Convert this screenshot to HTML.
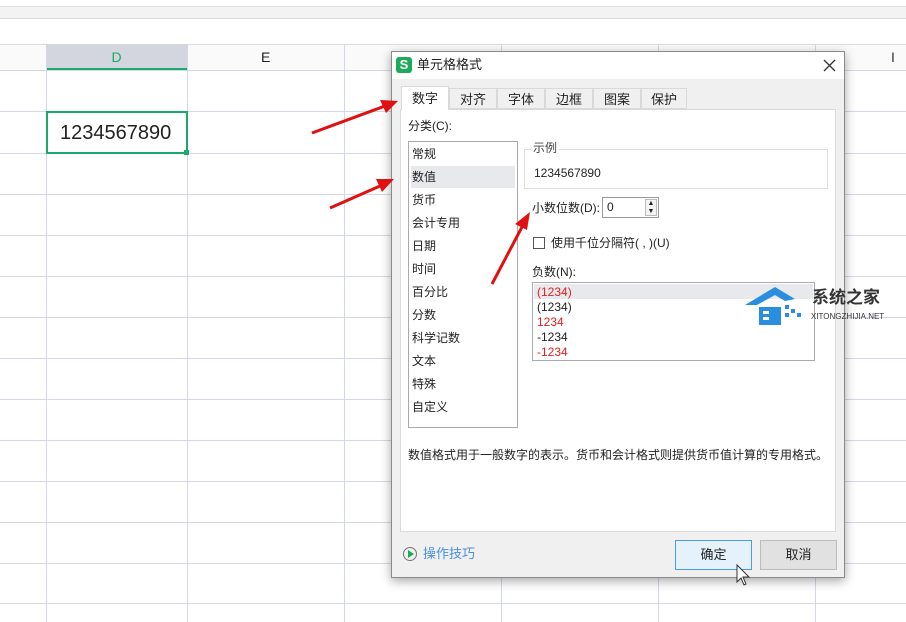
<!DOCTYPE html>
<html><head><meta charset="utf-8"><style>
*{margin:0;padding:0;box-sizing:border-box}
body{width:906px;height:622px;overflow:hidden;background:#fff;position:relative;font-family:"Liberation Sans","Noto Sans CJK SC",sans-serif;font-size:12px;color:#222;line-height:1.2}
.a{position:absolute}
.vl{position:absolute;top:44px;bottom:0;width:1px;background:#d4d7e6}
.hl{position:absolute;left:0;right:0;height:1px;background:#d4d7e6}
.li{position:absolute;left:3px;font-size:12px}
</style></head><body>
<div class="a" style="left:0;top:0;width:906px;height:7px;background:#fff;border-bottom:1px solid #e0e0e0"></div>
<div class="a" style="left:0;top:7px;width:906px;height:12px;background:#f3f3f3;border-bottom:1px solid #dcdcdc"></div>
<div class="a" style="left:0;top:44px;width:906px;height:26px;background:#fafafa;border-top:1px solid #dcdcdc"></div>
<div class="a" style="left:46px;top:44px;width:141px;height:26px;background:#d3d6de;border-bottom:2px solid #1aab6b;color:#1aab6b;font-size:14px;text-align:center;line-height:26px">D</div>
<div class="a" style="left:261px;top:44px;font-size:14px;line-height:26px">E</div>
<div class="a" style="left:891px;top:44px;font-size:14px;line-height:26px;color:#333">I</div>
<div class="vl" style="left:46px"></div><div class="vl" style="left:187px"></div><div class="vl" style="left:344px"></div><div class="vl" style="left:501px"></div><div class="vl" style="left:658px"></div><div class="vl" style="left:815px"></div>
<div class="hl" style="top:70px"></div><div class="hl" style="top:111px"></div><div class="hl" style="top:153px"></div><div class="hl" style="top:194px"></div><div class="hl" style="top:235px"></div><div class="hl" style="top:276px"></div><div class="hl" style="top:317px"></div><div class="hl" style="top:358px"></div><div class="hl" style="top:399px"></div><div class="hl" style="top:440px"></div><div class="hl" style="top:481px"></div><div class="hl" style="top:522px"></div><div class="hl" style="top:563px"></div><div class="hl" style="top:603px"></div>
<div class="a" style="left:46px;top:111px;width:142px;height:43px;border:2px solid #1aab6b;background:#fff;font-size:20px;line-height:41px;padding-left:12px;color:#222">1234567890</div>
<div class="a" style="left:184px;top:150px;width:5px;height:5px;background:#1aab6b"></div>

<div class="a" style="left:391px;top:51px;width:454px;height:527px;background:#f0f0f0;border:1px solid #8a8a8a;box-shadow:0 3px 10px rgba(0,0,0,.35)">
 <div class="a" style="left:0;top:0;width:452px;height:27px;background:#fff"></div>
 <div class="a" style="left:4px;top:5px;width:16px;height:16px;background:#1bab5b;border-radius:3px;color:#fff;font-weight:bold;font-size:13px;text-align:center;line-height:16px">S</div>
 <div class="a" style="left:25px;top:5px;font-size:13px">单元格格式</div>
 <svg class="a" style="left:431px;top:7px" width="13" height="13"><path d="M1 1L12 12M12 1L1 12" stroke="#333" stroke-width="1.3"/></svg>
 <div class="a" style="left:8px;top:57px;width:436px;height:423px;background:#fff;border:1px solid #d9d9d9"></div>
 <div class="a" style="left:9px;top:34px;width:48px;height:24px;background:#fff;border:1px solid #d9d9d9;border-bottom:none;text-align:center;line-height:24px;font-size:13px">数字</div>
 <div class="a" style="left:57px;top:36px;width:48px;height:21px;background:#f0f0f0;border:1px solid #d9d9d9;text-align:center;line-height:21px;font-size:13px">对齐</div>
 <div class="a" style="left:105px;top:36px;width:48px;height:21px;background:#f0f0f0;border:1px solid #d9d9d9;text-align:center;line-height:21px;font-size:13px">字体</div>
 <div class="a" style="left:153px;top:36px;width:48px;height:21px;background:#f0f0f0;border:1px solid #d9d9d9;text-align:center;line-height:21px;font-size:13px">边框</div>
 <div class="a" style="left:201px;top:36px;width:48px;height:21px;background:#f0f0f0;border:1px solid #d9d9d9;text-align:center;line-height:21px;font-size:13px">图案</div>
 <div class="a" style="left:249px;top:36px;width:46px;height:21px;background:#f0f0f0;border:1px solid #d9d9d9;text-align:center;line-height:21px;font-size:13px">保护</div>
 <div class="a" style="left:16px;top:67px">分类(C):</div>
 <div class="a" style="left:16px;top:89px;width:110px;height:287px;border:1px solid #aaa;background:#fff">
  <div class="li" style="top:5px">常规</div>
  <div class="a" style="left:2px;top:24px;width:104px;height:22px;background:#e8e9ed"></div>
  <div class="li" style="top:28px">数值</div>
  <div class="li" style="top:51px">货币</div>
  <div class="li" style="top:74px">会计专用</div>
  <div class="li" style="top:97px">日期</div>
  <div class="li" style="top:120px">时间</div>
  <div class="li" style="top:143px">百分比</div>
  <div class="li" style="top:166px">分数</div>
  <div class="li" style="top:189px">科学记数</div>
  <div class="li" style="top:212px">文本</div>
  <div class="li" style="top:235px">特殊</div>
  <div class="li" style="top:258px">自定义</div>
 </div>
 <div class="a" style="left:132px;top:97px;width:304px;height:40px;border:1px solid #ddd"></div>
 <div class="a" style="left:139px;top:89px;background:#fff;padding:0 2px;color:#444">示例</div>
 <div class="a" style="left:142px;top:114px">1234567890</div>
 <div class="a" style="left:140px;top:149px">小数位数(D):</div>
 <div class="a" style="left:210px;top:145px;width:57px;height:21px;border:1px solid #999;background:#fff;padding:2px 4px">0
  <div class="a" style="right:1px;top:1px;width:12px;height:17px;border:1px solid #bbb;font-size:7px;line-height:8px;text-align:center;background:#f4f4f4">▲<br>▼</div></div>
 <div class="a" style="left:141px;top:185px;width:12px;height:12px;border:1px solid #555;background:#fff"></div>
 <div class="a" style="left:159px;top:184px">使用千位分隔符( , )(U)</div>
 <div class="a" style="left:140px;top:213px">负数(N):</div>
 <div class="a" style="left:140px;top:230px;width:283px;height:79px;border:1px solid #aaa;background:#fff">
  <div class="a" style="left:1px;top:1px;width:279px;height:15px;background:#e8e9ed"></div>
  <div class="a" style="left:4px;top:2px;color:#e02020">(1234)</div>
  <div class="a" style="left:4px;top:17px">(1234)</div>
  <div class="a" style="left:4px;top:32px;color:#e02020">1234</div>
  <div class="a" style="left:4px;top:47px">-1234</div>
  <div class="a" style="left:4px;top:62px;color:#e02020">-1234</div>
 </div>
 <div class="a" style="left:16px;top:396px">数值格式用于一般数字的表示。货币和会计格式则提供货币值计算的专用格式。</div>
 <div class="a" style="left:11px;top:495px;width:14px;height:14px;border:1.5px solid #777;border-radius:50%"></div>
 <div class="a" style="left:16px;top:498px;width:0;height:0;border-left:6px solid #1bab5b;border-top:4px solid transparent;border-bottom:4px solid transparent"></div>
 <div class="a" style="left:31px;top:494px;color:#4a8fe0;font-size:13px">操作技巧</div>
 <div class="a" style="left:283px;top:488px;width:77px;height:30px;border:1px solid #4a9be8;background:#e5f1fb;text-align:center;line-height:28px;font-size:13px">确定</div>
 <div class="a" style="left:368px;top:488px;width:77px;height:30px;border:1px solid #bcbcbc;background:#e1e1e1;text-align:center;line-height:28px;font-size:13px">取消</div>
</div>
<div class="a" style="left:745px;top:283px;width:62px;height:45px">
<svg width="62" height="45"><path d="M0 22 L30 4 L50 16 L40 18 L30 12 L12 22Z" fill="#2a8ee0"/><rect x="14" y="24" width="22" height="18" fill="#2a8ee0"/><rect x="18" y="28" width="6" height="3" fill="#fff"/><rect x="18" y="34" width="6" height="3" fill="#fff"/><rect x="40" y="22" width="4" height="4" fill="#2a8ee0"/><rect x="46" y="26" width="4" height="4" fill="#2a8ee0"/><rect x="40" y="30" width="4" height="4" fill="#2a8ee0"/><rect x="52" y="30" width="4" height="4" fill="#2a8ee0"/></svg></div>
<div class="a" style="left:812px;top:288px;font-size:17px;font-weight:bold;color:#333">系统之家</div>
<div class="a" style="left:811px;top:312px;font-size:8px;color:#333">XITONGZHIJIA.NET</div>
<svg class="a" style="left:0;top:0" width="906" height="622"><g stroke="#e01010" stroke-width="3" fill="#e01010">
<line x1="312" y1="133" x2="385" y2="106"/><polygon points="398,101 380,100 386,113" stroke="none"/>
<line x1="330" y1="208" x2="380" y2="186"/><polygon points="394,179 376,179 382,192" stroke="none"/>
<line x1="492" y1="284" x2="522" y2="227"/><polygon points="530,212 515,224 527,230" stroke="none"/>
</g>
<path d="M737 565 L737 582 L741 578 L744 585 L746 584 L743 577 L749 577Z" fill="#fff" stroke="#333"/></svg>
</body></html>
